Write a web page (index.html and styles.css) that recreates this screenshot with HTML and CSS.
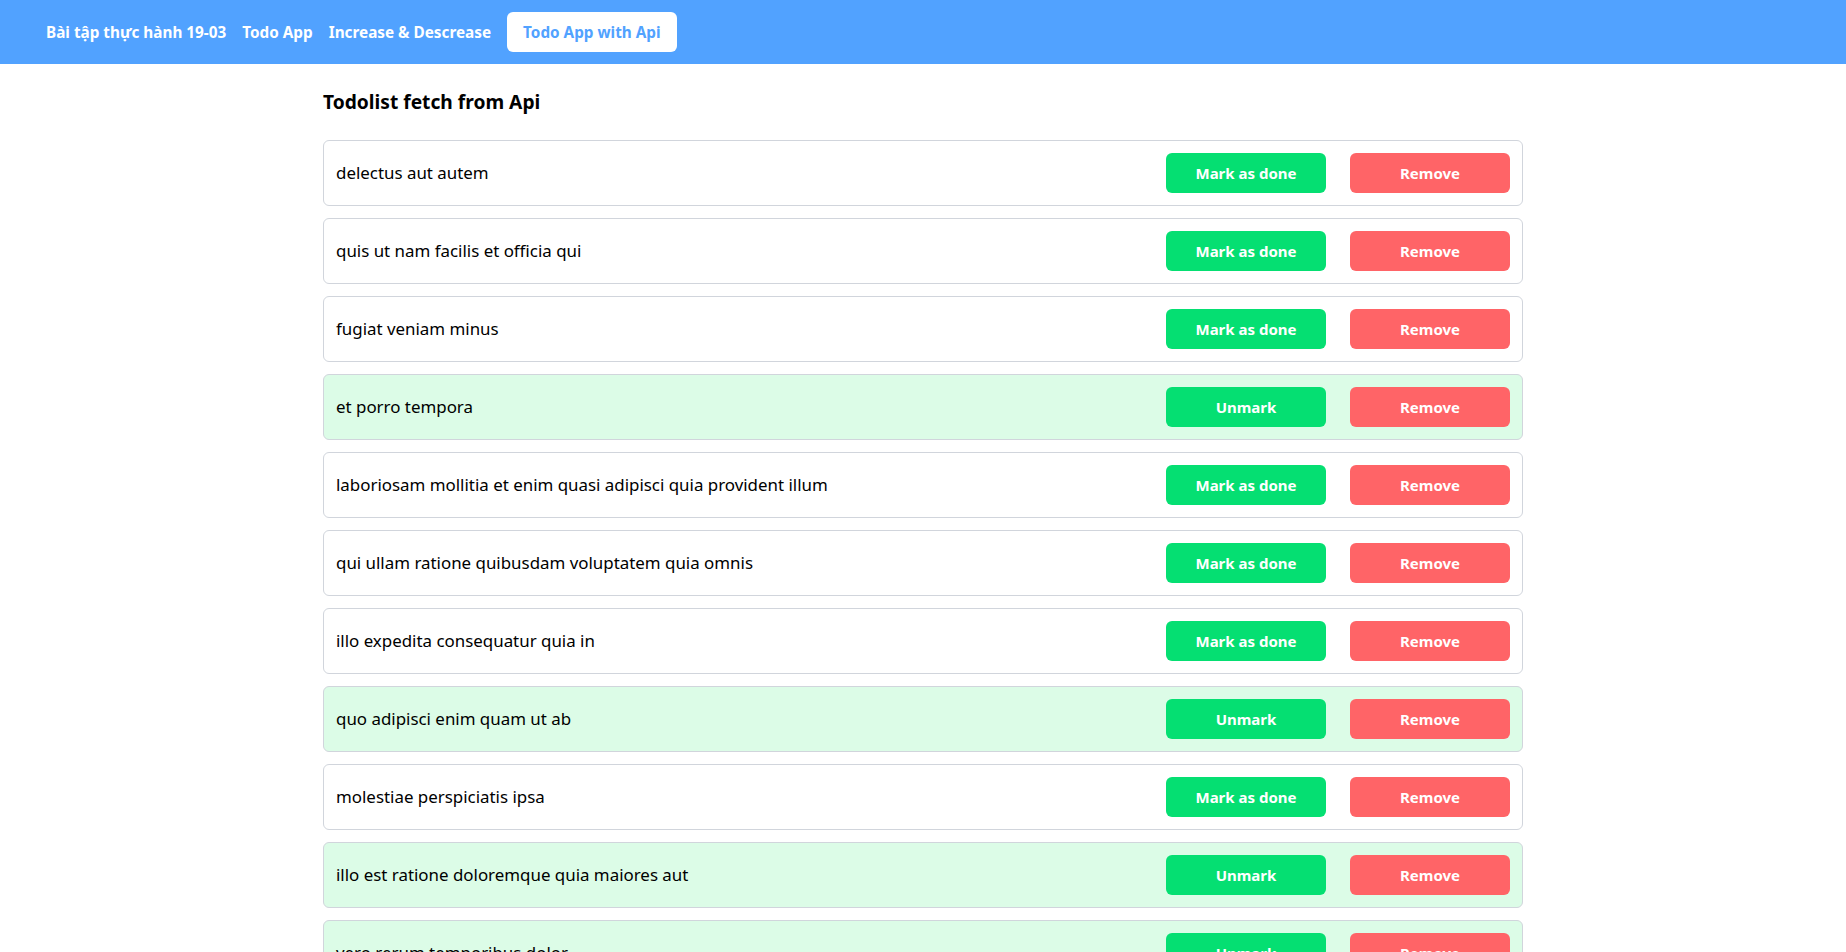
FILE: index.html
```html
<!DOCTYPE html>
<html lang="vi">
<head>
<meta charset="utf-8">
<title>Todo App with Api</title>
<link rel="stylesheet" href="styles.css">
</head>
<body>
<nav class="nav">
  <a class="nav-link" href="#">Bài tập thực hành 19-03</a>
  <a class="nav-link" href="#">Todo App</a>
  <a class="nav-link" href="#">Increase &amp; Descrease</a>
  <a class="nav-link active" href="#">Todo App with Api</a>
</nav>
<main class="container">
  <h1 class="title">Todolist fetch from Api</h1>
  <ul class="list">
    <li class="item"><span class="item-text">delectus aut autem</span><div class="actions"><button class="btn btn-done">Mark as done</button><button class="btn btn-remove">Remove</button></div></li>
    <li class="item"><span class="item-text">quis ut nam facilis et officia qui</span><div class="actions"><button class="btn btn-done">Mark as done</button><button class="btn btn-remove">Remove</button></div></li>
    <li class="item"><span class="item-text">fugiat veniam minus</span><div class="actions"><button class="btn btn-done">Mark as done</button><button class="btn btn-remove">Remove</button></div></li>
    <li class="item done"><span class="item-text">et porro tempora</span><div class="actions"><button class="btn btn-done">Unmark</button><button class="btn btn-remove">Remove</button></div></li>
    <li class="item"><span class="item-text">laboriosam mollitia et enim quasi adipisci quia provident illum</span><div class="actions"><button class="btn btn-done">Mark as done</button><button class="btn btn-remove">Remove</button></div></li>
    <li class="item"><span class="item-text">qui ullam ratione quibusdam voluptatem quia omnis</span><div class="actions"><button class="btn btn-done">Mark as done</button><button class="btn btn-remove">Remove</button></div></li>
    <li class="item"><span class="item-text">illo expedita consequatur quia in</span><div class="actions"><button class="btn btn-done">Mark as done</button><button class="btn btn-remove">Remove</button></div></li>
    <li class="item done"><span class="item-text">quo adipisci enim quam ut ab</span><div class="actions"><button class="btn btn-done">Unmark</button><button class="btn btn-remove">Remove</button></div></li>
    <li class="item"><span class="item-text">molestiae perspiciatis ipsa</span><div class="actions"><button class="btn btn-done">Mark as done</button><button class="btn btn-remove">Remove</button></div></li>
    <li class="item done"><span class="item-text">illo est ratione doloremque quia maiores aut</span><div class="actions"><button class="btn btn-done">Unmark</button><button class="btn btn-remove">Remove</button></div></li>
    <li class="item done"><span class="item-text">vero rerum temporibus dolor</span><div class="actions"><button class="btn btn-done">Unmark</button><button class="btn btn-remove">Remove</button></div></li>
    <li class="item done"><span class="item-text">ipsa repellendus fugit nisi</span><div class="actions"><button class="btn btn-done">Unmark</button><button class="btn btn-remove">Remove</button></div></li>
    <li class="item"><span class="item-text">et doloremque nulla</span><div class="actions"><button class="btn btn-done">Mark as done</button><button class="btn btn-remove">Remove</button></div></li>
  </ul>
</main>
</body>
</html>
```
FILE: styles.css
```css
* { box-sizing: border-box; }
html, body { margin: 0; padding: 0; }
body {
  font-family: "Noto Sans", "Open Sans", sans-serif;
  color: #000;
  background: #fff;
}
.nav {
  display: flex;
  align-items: center;
  gap: 16px;
  height: 64px;
  padding: 0 0 0 46px;
  background: #51a2ff;
}
.nav-link {
  color: #fff;
  font-weight: 700;
  font-size: 15.3px;
  line-height: 24px;
  text-decoration: none;
}
.nav-link.active {
  background: #fff;
  color: #51a2ff;
  padding: 8px 16px;
  border-radius: 6px;
}
.container {
  width: 1200px;
  margin: 0 auto;
  padding-top: 24px;
}
.title {
  margin: 0 0 24px;
  font-size: 19.2px;
  line-height: 28px;
  font-weight: 700;
}
.list {
  list-style: none;
  margin: 0;
  padding: 0;
  display: flex;
  flex-direction: column;
  gap: 12px;
}
.item {
  display: flex;
  align-items: center;
  justify-content: space-between;
  padding: 12px;
  border: 1px solid #d1d5dc;
  border-radius: 6px;
  background: #fff;
}
.item.done { background: #dcfce7; }
.item-text {
  font-size: 16.9px;
  line-height: 24px;
}
.actions {
  display: flex;
  gap: 24px;
}
.btn {
  width: 160px;
  height: 40px;
  border: 0;
  border-radius: 6px;
  color: #fff;
  font-family: inherit;
  font-weight: 700;
  font-size: 15px;
  cursor: pointer;
}
.btn-done { background: #05df72; }
.btn-remove { background: #ff6467; }
```
